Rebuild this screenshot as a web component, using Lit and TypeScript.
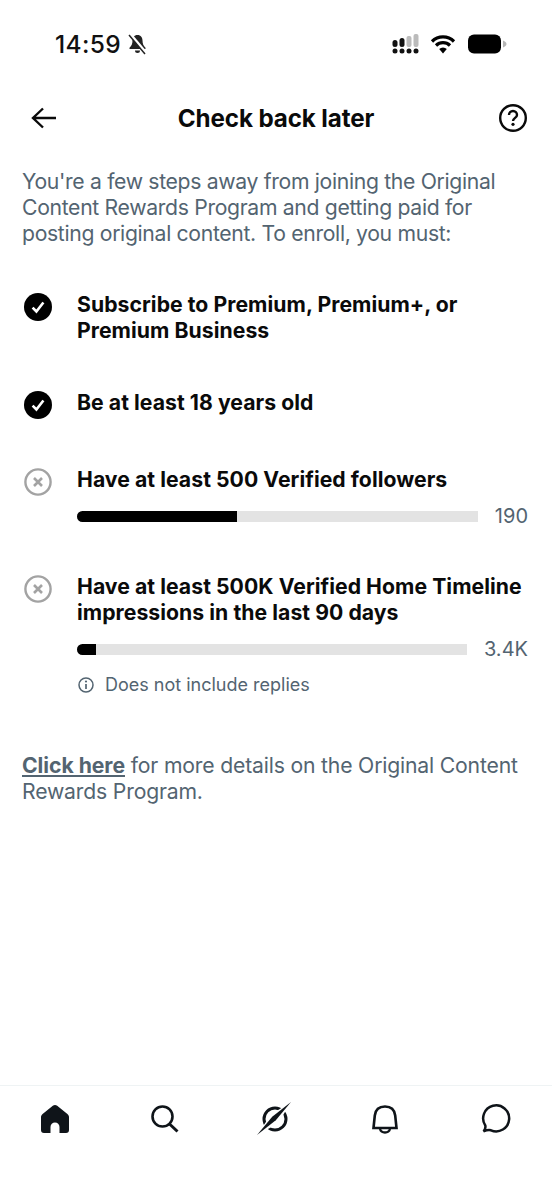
import { LitElement, html, css } from "lit";
import { customElement } from "lit/decorators.js";

const checkIcon = html`<svg class="ic" viewBox="0 0 28 28"><circle cx="14" cy="14" r="14" fill="#000"/><path d="M8.6 14.6l3.8 3.9 7-9" fill="none" stroke="#fff" stroke-width="2.6"/></svg>`;
const crossIcon = html`<svg class="ic" viewBox="0 0 28 28"><circle cx="14" cy="14" r="12.6" fill="none" stroke="#a3a3a3" stroke-width="2.4"/><path d="M10 10l8 8M18 10l-8 8" fill="none" stroke="#a3a3a3" stroke-width="2.6"/></svg>`;

@customElement("app-root")
export class AppRoot extends LitElement {
  static styles = css`
    :host { display: block; width: 552px; height: 1200px; background: #fff; font-family: Inter, "Liberation Sans", sans-serif; color: #0f1419; overflow: hidden; }
    .page { display: flex; flex-direction: column; height: 1200px; }
    .status { display: flex; align-items: center; justify-content: space-between; height: 44px; margin-top: 22px; padding: 0 45px 0 55px; }
    .time { display: flex; align-items: center; gap: 6px; font-size: 24.5px; font-weight: 500; color: #111; letter-spacing: 0.35px; }
    .sys { display: flex; align-items: center; gap: 10px; }
    .batt { margin-left: 2px; }
    .head { display: grid; grid-template-columns: 1fr auto 1fr; align-items: center; height: 40px; margin-top: 32px; padding: 0 24px; }
    .back { margin-left: 6px; }
    .title { font-size: 24.2px; font-weight: 700; color: #0a0a0a; letter-spacing: -0.12px; }
    .help { justify-self: end; }
    .intro { margin: 30px 22px 0; font-size: 21.2px; line-height: 26px; color: #536471; letter-spacing: -0.33px; }
    .rows { display: flex; flex-direction: column; margin: 45px 24px 0 24px; }
    .row { display: grid; grid-template-columns: 28px 1fr; column-gap: 25px; }
    .ic { width: 28px; height: 28px; margin-top: 2px; display: block; }
    .label { font-size: 21.2px; line-height: 26px; font-weight: 700; color: #0a0a0a; letter-spacing: 0.05px; }
    .gap1 { margin-top: 46px; }
    .gap2 { margin-top: 47px; }
    .gap3 { margin-top: 44px; }
    .prog { display: flex; align-items: center; gap: 17px; margin-top: 11px; }
    .bar { flex: 1; height: 11px; background: #e3e3e3; border-radius: 6px 0 0 6px; overflow: hidden; }
    .fill { height: 100%; background: #000; }
    .val { font-size: 20px; line-height: 26px; color: #536471; }
    .note { display: flex; align-items: center; gap: 10px; margin-top: 11px; font-size: 18px; line-height: 24px; color: #536471; }
    .foot { margin: 55px 22px 0; font-size: 21.2px; line-height: 26px; color: #536471; letter-spacing: -0.18px; }
    .foot a { font-weight: 700; color: #536471; text-decoration: underline; letter-spacing: -0.05px; }
    .nav { margin-top: auto; height: 115px; border-top: 1px solid #eff3f4; box-sizing: border-box; display: flex; justify-content: space-between; padding: 17px 28px 0 26px; }
    .nav svg { width: 58px; height: 32px; display: block; overflow: visible; }
  `;

  render() {
    return html`<div class="page">
      <div class="status">
        <div class="time">14:59
          <svg width="21" height="22" viewBox="0 0 19 22"><path d="M9.5 2c-3.4 0-5 2.6-5 5.6 0 3.4-1 5.4-3 7.2v1.2h16v-1.200c-2-1.800-3-3.800-3-7.200C14.500 4.600 12.900 2 9.500 2zM7 17.500a2.500 2.500 0 0 0 5 0z" fill="#222"/><path d="M2 1l16 19" stroke="#fff" stroke-width="3"/><path d="M1 2l16 19" stroke="#222" stroke-width="1.500"/></svg>
        </div>
        <div class="sys">
          <svg width="29" height="20" viewBox="0 0 28 20"><rect x="1" y="6" width="5" height="7" rx="2.500" fill="#111"/><rect x="8" y="4" width="5" height="9" rx="2.500" fill="#111"/><rect x="15" y="2" width="5" height="11" rx="2" fill="#bbb"/><rect x="22" y="0" width="5" height="13" rx="2" fill="#bbb"/><circle cx="3.500" cy="17" r="2.500" fill="#111"/><circle cx="10.500" cy="17" r="2.500" fill="#111"/><circle cx="17.500" cy="17" r="2.500" fill="#111"/><circle cx="24.500" cy="17" r="2.500" fill="#111"/></svg>
          <svg width="26" height="20" viewBox="0 0 26 20"><path d="M2 7.500a15.500 15.500 0 0 1 22 0M6 11.500a10 10 0 0 1 14 0" fill="none" stroke="#000" stroke-width="3.200"/><path d="M9.200 15a5.500 5.500 0 0 1 7.600 0L13 19.500z" fill="#000"/></svg>
          <svg class="batt" width="39" height="20" viewBox="0 0 39 20"><rect x="0" y="0.500" width="33" height="19" rx="6" fill="#000"/><path d="M35 6.500c2 .7 3.500 2 3.500 3.500s-1.500 2.800-3.500 3.500z" fill="#b5b5b5"/></svg>
        </div>
      </div>

      <div class="head">
        <svg class="back" width="27" height="24" viewBox="0 0 27 24"><path d="M13 2.500L3 12l10 9.500M3 12h23" fill="none" stroke="#0a0a0a" stroke-width="2.400"/></svg>
        <div class="title">Check back later</div>
        <svg class="help" width="30" height="30" viewBox="0 0 30 30"><circle cx="15" cy="15" r="12.800" fill="none" stroke="#0a0a0a" stroke-width="2.400"/><path d="M11 12a4 4 0 0 1 8 0c0 2.800-4 3-4 6" fill="none" stroke="#0a0a0a" stroke-width="2.400"/><circle cx="15" cy="21.300" r="1.600" fill="#0a0a0a"/></svg>
      </div>

      <div class="intro">You're a few steps away from joining the Original Content Rewards Program and getting paid for posting original content. To enroll, you must:</div>

      <div class="rows">
        <div class="row">${checkIcon}<div class="label">Subscribe to Premium, Premium+, or Premium Business</div></div>
        <div class="row gap1">${checkIcon}<div class="label">Be at least 18 years old</div></div>
        <div class="row gap2">${crossIcon}<div>
          <div class="label">Have at least 500 Verified followers</div>
          <div class="prog"><div class="bar"><div class="fill" style="width:40%"></div></div><div class="val">190</div></div>
        </div></div>
        <div class="row gap3">${crossIcon}<div>
          <div class="label">Have at least 500K Verified Home Timeline impressions in the last 90 days</div>
          <div class="prog"><div class="bar"><div class="fill" style="width:5%"></div></div><div class="val">3.4K</div></div>
          <div class="note">
            <svg width="18" height="18" viewBox="0 0 18 18"><circle cx="9" cy="9" r="7" fill="none" stroke="#536471" stroke-width="1.500"/><path d="M9 8v5" stroke="#536471" stroke-width="1.700"/><circle cx="9" cy="5.500" r="1.100" fill="#536471"/></svg>
            Does not include replies
          </div>
        </div></div>
      </div>

      <div class="foot"><a>Click here</a> for more details on the Original Content Rewards Program.</div>

      <nav class="nav">
        <svg viewBox="0 0 58 32"><path d="M26.800 2.800a3.500 3.500 0 0 1 4.400 0l10.200 8.200c1 .8 1.600 2 1.600 3.300V27a3 3 0 0 1-3 3h-6.500v-6a4.500 4.500 0 0 0-9 0v6H18a3 3 0 0 1-3-3V14.300c0-1.300.6-2.500 1.600-3.300z" fill="#0f1419"/></svg>
        <svg viewBox="0 0 58 32"><circle cx="26.500" cy="13.500" r="10" fill="none" stroke="#0f1419" stroke-width="2.600"/><path d="M33.500 21l8 7.500" stroke="#0f1419" stroke-width="3"/></svg>
        <svg viewBox="0 0 58 32"><circle cx="29" cy="16" r="11" fill="none" stroke="#0f1419" stroke-width="3"/><path d="M45-1L32 20.500 11 32 25 11.500z" fill="#fff"/><path d="M45-1L29.800 17.300 11 32 26.200 13.700z" fill="#0f1419"/></svg>
        <svg viewBox="0 0 58 32"><path d="M17.500 25l1.300-12.500C19.500 6.500 23.500 3.500 29 3.500s9.500 3 10.200 9L40.500 25z" fill="none" stroke="#0f1419" stroke-width="2.600"/><path d="M24 26c.7 2.300 2.700 3.500 5 3.500s4.300-1.200 5-3.500" fill="none" stroke="#0f1419" stroke-width="2.400"/></svg>
        <svg viewBox="0 0 58 32"><path d="M17.500 28.300c1.500-1.500 2.300-3.300 1.800-5.800A13 13 0 1 1 25 27.300c-2.500-.8-5 0-7.500 1z" fill="none" stroke="#0f1419" stroke-width="2.500"/></svg>
      </nav>
    </div>`;
  }
}
